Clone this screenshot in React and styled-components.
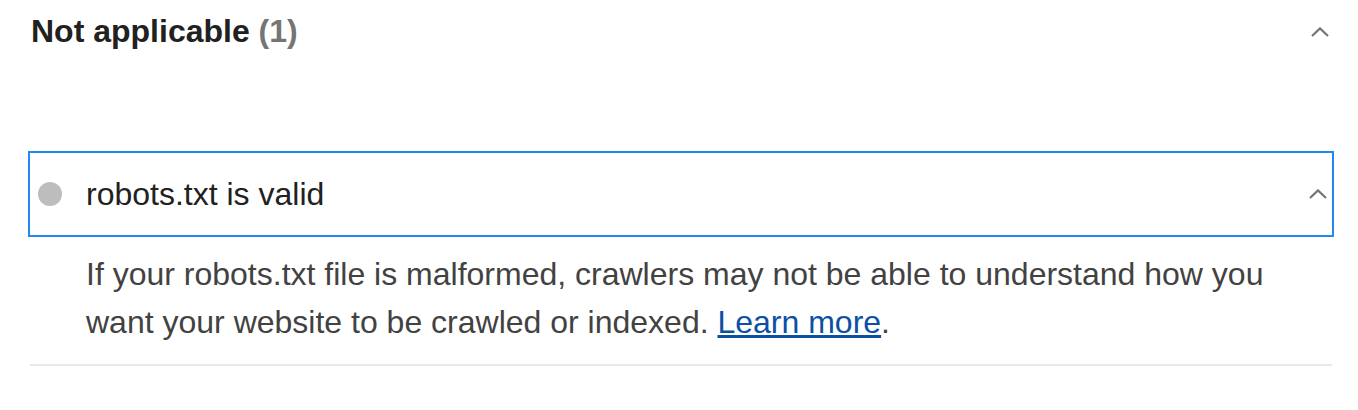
import React from "react";
import styled, { createGlobalStyle } from "styled-components";

const GlobalStyle = createGlobalStyle`
  body {
    margin: 0;
    background: #ffffff;
    font-family: "Liberation Sans", Arial, Helvetica, sans-serif;
  }
`;

const Page = styled.div`
  width: 1302px;
  padding: 11px 0 0 30px;
`;

const GroupHeader = styled.div`
  display: flex;
  align-items: center;
  justify-content: space-between;
  height: 40px;
  padding: 0 3px 0 1px;
`;

const GroupTitle = styled.h2`
  margin: 0;
  font-size: 32px;
  line-height: 40px;
  font-weight: bold;
  color: #212121;
`;

const Count = styled.span`
  color: #757575;
`;

const Audit = styled.div`
  margin-top: 102px;
  border-bottom: 2px solid #e8e8e8;
`;

const Summary = styled.div`
  display: flex;
  align-items: center;
  height: 82px;
  padding: 0 5px 0 8px;
  outline: 2px solid #2088ee;
`;

const Dot = styled.span`
  width: 24px;
  height: 24px;
  border-radius: 50%;
  background: ${(p) => p.color};
  flex: none;
`;

const AuditTitle = styled.div`
  flex: 1;
  margin-left: 24px;
  font-size: 32px;
  line-height: 38px;
  color: #212121;
`;

const Description = styled.p`
  margin: 0;
  padding: 15px 60px 18px 56px;
  font-size: 32px;
  line-height: 48px;
  color: #424242;
`;

const Link = styled.a`
  color: #0b50a4;
  text-decoration: underline;
`;

const Chevron = styled.svg`
  width: 18px;
  height: 10px;
  flex: none;
  margin-top: ${(p) => p.offset || 0}px;
`;

function ChevronUp({ offset }) {
  return (
    <Chevron viewBox="0 0 18 10" offset={offset}>
      <polyline points="1,9 9,1.4 17,9" fill="none" stroke="#757575" strokeWidth="2.2" />
    </Chevron>
  );
}

export default function App() {
  return (
    <>
      <GlobalStyle />
      <Page>
        <GroupHeader>
          <GroupTitle>
            Not applicable <Count>(1)</Count>
          </GroupTitle>
          <ChevronUp offset={2} />
        </GroupHeader>
        <Audit>
          <Summary>
            <Dot color="#bdbdbd" />
            <AuditTitle>robots.txt is valid</AuditTitle>
            <ChevronUp offset={0} />
          </Summary>
          <Description>
            If your robots.txt file is malformed, crawlers may not be able to understand how you
            want your website to be crawled or indexed. <Link href="#">Learn more</Link>.
          </Description>
        </Audit>
      </Page>
    </>
  );
}
